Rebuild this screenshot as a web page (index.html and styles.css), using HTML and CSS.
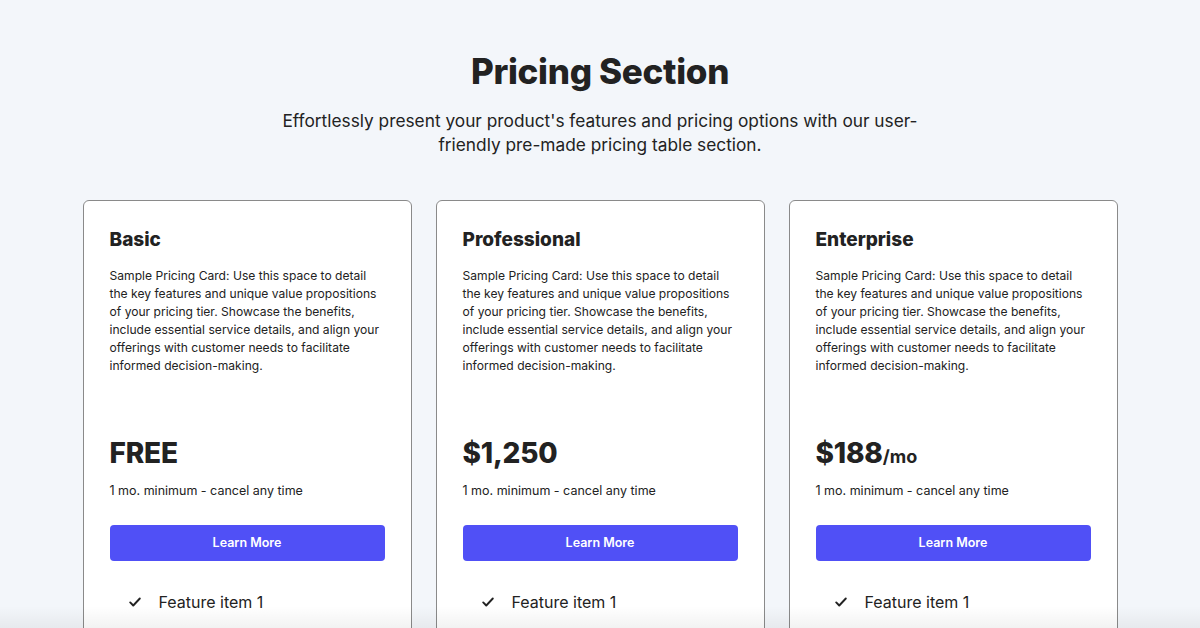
FILE: index.html
```html
<!DOCTYPE html>
<html lang="en">
<head>
<meta charset="utf-8">
<title>Pricing Section</title>
<link rel="stylesheet" href="styles.css">
</head>
<body>
<main class="page">
  <header class="intro">
    <h1 class="title">Pricing Section</h1>
    <p class="lead">Effortlessly present your product's features and pricing options with our user-friendly pre-made pricing table section.</p>
  </header>
  <section class="cards">
    <article class="card">
      <h2 class="card-title">Basic</h2>
      <p class="card-desc">Sample Pricing Card: Use this space to detail the key features and unique value propositions of your pricing tier. Showcase the benefits, include essential service details, and align your offerings with customer needs to facilitate informed decision-making.</p>
      <div class="price">FREE</div>
      <p class="terms">1 mo. minimum - cancel any time</p>
      <a class="btn" href="#">Learn More</a>
      <ul class="features">
        <li class="feature"><svg class="check" viewBox="0 0 16 16" width="14" height="14"><path d="M2.5 8.5l3.5 3.5 7.5-8" fill="none" stroke="#222" stroke-width="2.2" stroke-linecap="round" stroke-linejoin="round"/></svg>Feature item 1</li>
      </ul>
    </article>
    <article class="card">
      <h2 class="card-title">Professional</h2>
      <p class="card-desc">Sample Pricing Card: Use this space to detail the key features and unique value propositions of your pricing tier. Showcase the benefits, include essential service details, and align your offerings with customer needs to facilitate informed decision-making.</p>
      <div class="price">$1,250</div>
      <p class="terms">1 mo. minimum - cancel any time</p>
      <a class="btn" href="#">Learn More</a>
      <ul class="features">
        <li class="feature"><svg class="check" viewBox="0 0 16 16" width="14" height="14"><path d="M2.5 8.5l3.5 3.5 7.5-8" fill="none" stroke="#222" stroke-width="2.2" stroke-linecap="round" stroke-linejoin="round"/></svg>Feature item 1</li>
      </ul>
    </article>
    <article class="card">
      <h2 class="card-title">Enterprise</h2>
      <p class="card-desc">Sample Pricing Card: Use this space to detail the key features and unique value propositions of your pricing tier. Showcase the benefits, include essential service details, and align your offerings with customer needs to facilitate informed decision-making.</p>
      <div class="price">$188<span class="per">/mo</span></div>
      <p class="terms">1 mo. minimum - cancel any time</p>
      <a class="btn" href="#">Learn More</a>
      <ul class="features">
        <li class="feature"><svg class="check" viewBox="0 0 16 16" width="14" height="14"><path d="M2.5 8.5l3.5 3.5 7.5-8" fill="none" stroke="#222" stroke-width="2.2" stroke-linecap="round" stroke-linejoin="round"/></svg>Feature item 1</li>
      </ul>
    </article>
  </section>
  <div class="fade"></div>
</main>
</body>
</html>
```
FILE: styles.css
```css
* { box-sizing: border-box; }
html, body { margin: 0; padding: 0; }
body {
  background: #f3f6fa;
  font-family: Inter, "Liberation Sans", sans-serif;
  color: #222;
  overflow: hidden;
  height: 628px;
}
.page { position: relative; height: 628px; overflow: hidden; }
.intro { text-align: center; padding-top: 50px; }
.title {
  margin: 0;
  font-family: Inter, sans-serif;
  font-weight: 800;
  font-size: 35px;
  line-height: 42px;
  letter-spacing: -0.3px;
  color: #222;
}
.lead {
  margin: 17px auto 0;
  width: 650px;
  font-size: 17.3px;
  line-height: 24px;
  color: #222;
}
.cards {
  display: grid;
  grid-template-columns: repeat(3, 329px);
  gap: 24px;
  justify-content: center;
  margin-top: 43px;
}
.card {
  background: #fff;
  border: 1px solid #8a8a8a;
  border-radius: 6px;
  padding: 27px 26px 0;
  height: 460px;
}
.card-title {
  margin: 0;
  font-weight: 800;
  font-size: 19px;
  line-height: 24px;
  color: #222;
}
.card-desc {
  margin: 15px 0 0;
  font-size: 12.1px;
  line-height: 18px;
  color: #222;
  min-height: 144px;
}
.price {
  margin-top: 26px;
  font-weight: 800;
  font-size: 28px;
  line-height: 32px;
  color: #222;
  letter-spacing: -0.2px;
}
.per { font-size: 18px; font-weight: 700; letter-spacing: 0; line-height: 1; }
.terms {
  margin: 13px 0 0;
  font-size: 12.5px;
  line-height: 18px;
}
.btn {
  display: block;
  margin-top: 25px;
  height: 36px;
  line-height: 36px;
  background: #5050f6;
  border-radius: 4px;
  color: #fff;
  text-align: center;
  text-decoration: none;
  font-size: 12.5px;
  font-weight: 600;
}
.features { list-style: none; margin: 30px 0 0; padding: 0 0 0 18px; }
.feature {
  display: flex;
  align-items: center;
  gap: 17px;
  font-size: 16px;
  line-height: 22px;
}
.check { flex: none; }
.fade {
  position: absolute;
  left: 0; right: 0; bottom: 0;
  height: 22px;
  background: linear-gradient(to bottom, rgba(0,0,0,0), rgba(0,0,0,0.05));
  pointer-events: none;
}
```
